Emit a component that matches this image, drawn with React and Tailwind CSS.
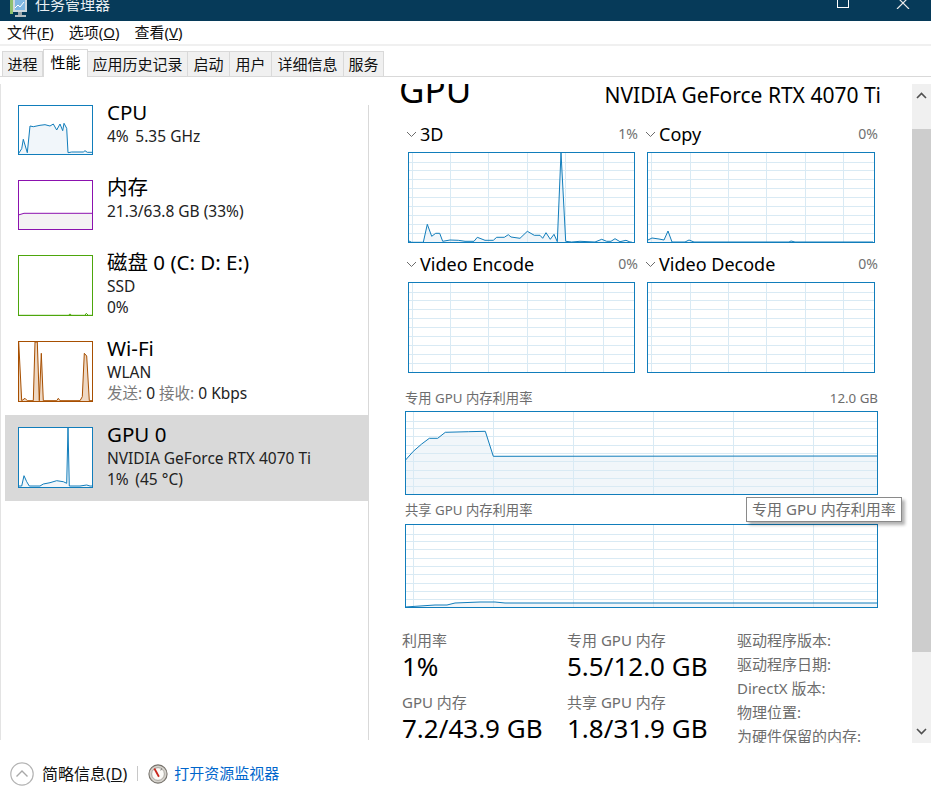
import React from "react";

const blue = "#117dbb";

function Chart({ w, h, vs = [], hs = [], pts = [], color = blue, fill = "#f1f6fa", grid = "#d9eaf4" }) {
  const inner = pts.map((p) => p.join(",")).join(" ");
  const area = pts.length ? `${pts[0][0]},${h} ${inner} ${pts[pts.length - 1][0]},${h}` : "";
  return (
    <svg width={w} height={h} viewBox={`0 0 ${w} ${h}`} className="block bg-white">
      {pts.length > 0 && <polygon points={area} fill={fill} />}
      {hs.map((y) => <line key={"h" + y} x1="0" x2={w} y1={y + 0.5} y2={y + 0.5} stroke={grid} />)}
      {vs.map((x) => <line key={"v" + x} x1={x + 0.5} x2={x + 0.5} y1="0" y2={h} stroke={grid} />)}
      {pts.length > 0 && <polyline points={inner} fill="none" stroke={color} strokeWidth="1" />}
      <rect x="0.5" y="0.5" width={w - 1} height={h - 1} fill="none" stroke={color} />
    </svg>
  );
}

const map3 = (arr, ox, oy) => arr.map(([x, y]) => [+(x / 3 - ox).toFixed(1), +(y / 3 - oy).toFixed(1)]);

const gridV = [4, 42, 80, 119, 157, 195];
const gridV2 = [4, 43, 81, 119, 158, 196];
const gridH = [10, 18, 27, 36, 45, 54, 63, 72, 81];
const memV = [8, 88, 168, 248, 328, 408];
const memH = [10, 17, 25, 34, 42, 50, 59, 67, 75];

const d3 = map3([[10,272],[20,277],[55,277],[67,223],[80,259],[92,250],[104,250],[113,274],[135,270],[160,271],[180,274],[207,274],[217,262],[240,271],[265,271],[275,262],[298,262],[310,254],[318,261],[345,265],[367,244],[388,256],[405,256],[413,265],[423,248],[436,268],[447,253],[457,275],[468,8],[482,274],[500,276],[525,274],[570,276],[590,268],[605,274],[618,274],[630,266],[645,275],[663,271],[675,276],[680,276]], 3, 2);
const copy = [[1,88],[5,86],[12,87],[17,88],[21,79],[25,90],[38,90],[42,88],[47,90],[100,90],[142,90],[144,89],[148,90],[226,90]];
const memP = map3([[16,157],[40,130],[65,108],[88,91],[113,91],[136,73],[205,71],[256,70],[280,145]], 5, 3).concat([[473, 45]]);
const sharedP = [[0,83],[30,81],[42,81],[50,79],[75,78],[90,78],[100,79],[473,79]];

const cpuT = map3([[55,462],[65,446],[70,418],[82,458],[90,378],[100,380],[120,376],[135,374],[150,378],[160,372],[170,390],[180,372],[188,392],[192,370],[200,385],[204,458],[215,456],[250,456],[255,452],[262,457],[278,457]], 18, 105);
const memT = map3([[55,645],[72,640],[278,640]], 18, 180);
const diskT = map3([[55,196],[205,196],[210,192],[215,196],[255,196],[259,190],[265,196],[278,196]], 18, 5);
const wifiT = map3([[56,275],[65,452],[75,445],[82,452],[100,452],[105,276],[112,276],[118,452],[124,310],[130,452],[170,452],[175,445],[180,452],[240,452],[247,440],[253,310],[260,318],[268,452],[278,452]], 18, 91);
const gpuT = map3([[55,708],[65,708],[72,677],[80,695],[88,708],[120,708],[130,702],[150,698],[170,692],[190,695],[200,700],[204,533],[208,708],[240,708],[260,705],[270,708],[278,708]], 18, 177);

const Chevron = () => (
  <svg width="11" height="7" viewBox="0 0 11 7" className="shrink-0"><path d="M1 1l4.5 4.5L10 1" fill="none" stroke="#6d6d6d" strokeWidth="1" /></svg>
);

function Engine({ title, pct, pts, w = 227, vs = gridV }) {
  return (
    <div>
      <div className="h-[30px] flex items-start -ml-[2px] -mr-[3px]">
        <div className="flex items-center h-[24px]">
          <Chevron />
          <span className="ml-[3px] text-[18px] leading-[24px] text-black">{title}</span>
        </div>
        <span className="ml-auto text-[14px] leading-[24px] text-[#707070]">{pct}</span>
      </div>
      <Chart w={w} h={91} vs={vs} hs={gridH} pts={pts} />
    </div>
  );
}

function Row({ title, lines, selected, children }) {
  return (
    <div className={`flex gap-[14px] pl-[13px] pt-[12px] pb-[13px] ${selected ? "bg-[#d9d9d9]" : ""}`}>
      {children}
      <div className="-mt-[5px] -mb-[3px]">
        <div className="h-[26px] text-[20.5px] leading-[24px] text-black whitespace-nowrap">{title}</div>
        {lines.map((l, i) => (
          <div key={i} className="text-[15.5px] leading-[21px] text-[#222] whitespace-nowrap">{l}</div>
        ))}
      </div>
    </div>
  );
}

function Stat({ label, value }) {
  return (
    <div className="h-[62px]">
      <div className="text-[15px] leading-[20px] text-[#6d6d6d] whitespace-nowrap">{label}</div>
      <div className="text-[26px] leading-[32px] text-black whitespace-nowrap">{value}</div>
    </div>
  );
}

const tabs = [
  ["进程", "w-[41px]"],
  ["性能", "w-[45px]"],
  ["应用历史记录", "w-[100px]"],
  ["启动", "w-[42px]"],
  ["用户", "w-[42px]"],
  ["详细信息", "w-[72px]"],
  ["服务", "w-[40px]"],
];

export default function App() {
  return (
    <div className="relative w-[931px] h-[802px] overflow-hidden bg-white flex flex-col [font-family:'Noto_Sans','Noto_Sans_CJK_SC',sans-serif]">
      {/* title bar */}
      <div className="h-[21px] bg-[#063a59] flex items-end overflow-hidden shrink-0 pl-[9px] pr-[21px]">
        <svg width="20" height="21" viewBox="0 0 20 21" className="shrink-0">
          <rect x="1" y="0" width="3" height="14" fill="#8fc06e" />
          <rect x="4" y="0" width="14" height="12" fill="#cfd8de" />
          <rect x="6" y="0" width="10" height="10" fill="#7fb7e2" />
          <path d="M6 8l3-3 2 2 4-5" stroke="#fff" strokeWidth="1" fill="none" />
          <rect x="9" y="12" width="4" height="3" fill="#9aa3a8" />
          <rect x="6" y="15" width="11" height="2" fill="#b6bec2" />
        </svg>
        <span className="ml-[6px] mb-[7px] text-[15px] leading-[20px] text-[#e8eef2]">任务管理器</span>
        <svg width="14" height="8" viewBox="0 0 14 8" className="ml-auto mb-[13px]"><rect x="1.5" y="-3" width="11" height="10.5" fill="none" stroke="#fff" /></svg>
        <svg width="14" height="9" viewBox="0 0 14 9" className="ml-[46px] mb-[12px]"><path d="M1 9l12-12M1-3l12 12" fill="none" stroke="#e8e8e8" strokeWidth="1.2" /></svg>
      </div>
      {/* menu */}
      <div className="h-[23px] flex items-center gap-[15px] pl-[7px] text-[15px] text-[#111] shrink-0">
        <span>文件(<span className="underline">F</span>)</span>
        <span>选项(<span className="underline">O</span>)</span>
        <span>查看(<span className="underline">V</span>)</span>
      </div>
      <div className="h-[2px] bg-[#f0f0f0] shrink-0" />
      {/* tabs */}
      <div className="h-[31px] shrink-0 flex items-end pl-[2px] border-b border-[#d9d9d9]">
        {tabs.map(([t, w], i) =>
          i === 1 ? (
            <div key={t} className={`${w} h-[28px] -mb-px pb-[3px] flex items-center justify-center bg-white border border-b-0 border-[#d9d9d9] text-[15px] text-black`}>{t}</div>
          ) : (
            <div key={t} className={`${w} h-[25px] flex items-center justify-center bg-[#f0f0f0] border border-b-0 border-l-0 first:border-l border-[#d9d9d9] text-[15px] text-[#111]`}>{t}</div>
          )
        )}
      </div>
      {/* body */}
      <div className="flex h-[666px] shrink-0">
        <div className="w-px mt-[7px] mb-[3px] bg-[#e3e3e3]" />
        <div className="ml-[4px] w-[363px] pt-[16px]">
          <Row title="CPU" lines={["4%\u2009 5.35 GHz"]}>
            <Chart w={75} h={50} pts={cpuT} />
          </Row>
          <Row title="内存" lines={["21.3/63.8 GB (33%)"]}>
            <Chart w={75} h={50} pts={memT} color="#8b12ae" fill="#f4f2f4" />
          </Row>
          <Row title="磁盘 0 (C: D: E:)" lines={["SSD", "0%"]}>
            <Chart w={75} h={61} pts={diskT} color="#4da60c" fill="#eff7e8" />
          </Row>
          <Row title="Wi-Fi" lines={["WLAN", <span key="w"><span className="text-[#7a7a7a]">发送:</span> 0 <span className="text-[#7a7a7a]">接收:</span> 0 Kbps</span>]}>
            <Chart w={75} h={61} pts={wifiT} color="#a74f01" fill="#eed8c3" />
          </Row>
          <Row title="GPU 0" lines={["NVIDIA GeForce RTX 4070 Ti", "1%\u2009 (45 °C)"]} selected>
            <Chart w={75} h={61} pts={gpuT} />
          </Row>
        </div>
        <div className="w-px mt-[28px] mb-[3px] bg-[#d9d9d9]" />
        {/* right pane */}
        <div className="mt-[7px] w-[543px] overflow-hidden">
          <div className="h-[38px] flex items-start pl-[30px] pr-[31px]">
            <div className="-mt-[18px] text-[35px] leading-[48px] text-black">GPU</div>
            <div className="ml-auto -mt-[1px] text-[21px] leading-[24px] text-black whitespace-nowrap">NVIDIA GeForce RTX 4070 Ti</div>
          </div>
          <div className="ml-[39px] w-[467px] grid grid-cols-[227px_228px] gap-x-[12px] gap-y-[9px]">
            <Engine title="3D" pct="1%" pts={d3} />
            <Engine title="Copy" pct="0%" pts={copy} w={228} vs={gridV2} />
            <Engine title="Video Encode" pct="0%" />
            <Engine title="Video Decode" pct="0%" w={228} vs={gridV2} />
          </div>
          <div className="ml-[36px] w-[473px]">
            <div className="mt-[15px] h-[22px] mb-px flex items-center justify-between text-[13.3px] text-[#6d6d6d]">
              <span>专用 GPU 内存利用率</span><span>12.0 GB</span>
            </div>
            <Chart w={473} h={84} vs={memV} hs={memH} pts={memP} />
            <div className="mt-[5px] mb-[2px] h-[22px] flex items-center text-[13.3px] text-[#6d6d6d]">
              <span>共享 GPU 内存利用率</span>
            </div>
            <Chart w={473} h={84} vs={memV} hs={memH} pts={sharedP} />
          </div>
          <div className="mt-[22px] flex pl-[33px]">
            <div className="w-[165px]">
              <Stat label="利用率" value="1%" />
              <Stat label="GPU 内存" value="7.2/43.9 GB" />
            </div>
            <div className="w-[170px]">
              <Stat label="专用 GPU 内存" value="5.5/12.0 GB" />
              <Stat label="共享 GPU 内存" value="1.8/31.9 GB" />
            </div>
            <div className="text-[15px] leading-[24px] text-[#6d6d6d] -mt-[2px]">
              <div>驱动程序版本:</div>
              <div>驱动程序日期:</div>
              <div>DirectX 版本:</div>
              <div>物理位置:</div>
              <div>为硬件保留的内存:</div>
            </div>
          </div>
        </div>
        {/* scrollbar */}
        <div className="mt-[7px] w-[19px] bg-[#f0f0f0] flex flex-col items-center">
          <div className="h-[45px] w-full flex justify-center pt-[8px]">
            <svg width="11" height="7" viewBox="0 0 11 7"><path d="M1 6l4.5-4.5L10 6" fill="none" stroke="#505050" strokeWidth="1.6" /></svg>
          </div>
          <div className="h-[523px] w-full bg-[#cdcdcd]" />
          <div className="mt-auto pb-[8px]">
            <svg width="11" height="7" viewBox="0 0 11 7" className="block"><path d="M1 1l4.5 4.5L10 1" fill="none" stroke="#505050" strokeWidth="1.6" /></svg>
          </div>
        </div>
      </div>
      {/* footer */}
      <div className="flex-1 flex items-center pl-[10px] pt-[2px]">
        <svg width="24" height="24" viewBox="0 0 24 24" className="shrink-0">
          <circle cx="12" cy="12" r="11.2" fill="#fff" stroke="#b4b4b4" strokeWidth="1.2" />
          <path d="M6.5 14.5L12 9l5.5 5.5" fill="none" stroke="#a8a8a8" strokeWidth="1.4" />
        </svg>
        <span className="ml-[8px] text-[16px] text-[#111] whitespace-nowrap">简略信息(<span className="underline">D</span>)</span>
        <div className="ml-[10px] w-px h-[15px] bg-[#c8c8c8]" />
        <svg width="20" height="20" viewBox="0 0 22 22" className="ml-[10px] shrink-0">
          <circle cx="11" cy="11" r="10" fill="#d5d2cc" stroke="#77736c" strokeWidth="1.2" />
          <circle cx="11" cy="11" r="7" fill="#fbfaf7" stroke="#a5a19a" strokeWidth="1" />
          <path d="M7 5l5 9" stroke="#c8261c" strokeWidth="2" />
          <path d="M15 5l-1 2" stroke="#555" strokeWidth="1" />
        </svg>
        <span className="ml-[6px] text-[15px] text-[#0066cc] whitespace-nowrap">打开资源监视器</span>
      </div>
      {/* tooltip */}
      <div className="absolute left-[746px] top-[497px] w-[156px] h-[25px] bg-white border border-[#8a8a8a] shadow-[3px_3px_3px_rgba(0,0,0,0.3)] flex items-center justify-center text-[15px] text-[#6d6d6d] whitespace-nowrap">
        专用 GPU 内存利用率
      </div>
    </div>
  );
}
